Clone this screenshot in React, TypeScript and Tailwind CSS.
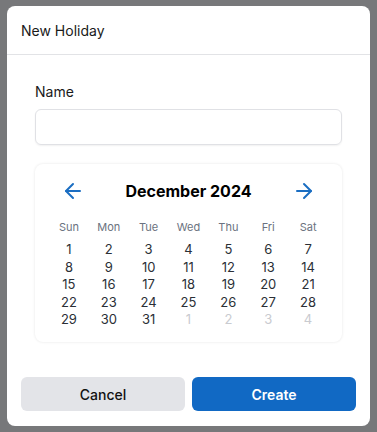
import React from 'react';
import { ArrowLeft, ArrowRight } from 'lucide-react';

const weekDays = ['Sun', 'Mon', 'Tue', 'Wed', 'Thu', 'Fri', 'Sat'];

function buildDays() {
  // December 2024 starts on a Sunday
  const days: { n: number; muted: boolean }[] = [];
  for (let i = 1; i <= 31; i++) days.push({ n: i, muted: false });
  for (let i = 1; i <= 4; i++) days.push({ n: i, muted: true });
  return days;
}

export default function App() {
  const [name, setName] = React.useState('');
  const days = buildDays();

  return (
    <div className="min-h-screen w-full bg-[#77787a] px-[7px] pt-[6px] pb-[6px] font-['Inter',sans-serif]">
      <div className="flex h-[420px] flex-col rounded-lg bg-white">
        <div className="flex h-[49px] items-center border-b border-[#e2e3e6] px-[14px]">
          <h2 className="text-[14px] text-[#1a1a1a]">New Holiday</h2>
        </div>

        <div className="flex flex-1 flex-col px-[28px] pt-[27px]">
          <label className="mb-[7px] block text-[14px] leading-5 text-[#1a1a1a]">Name</label>
          <input
            value={name}
            onChange={(e) => setName(e.target.value)}
            className="h-[36px] w-full rounded-md border border-[#e0e1e5] px-3 text-sm shadow-[0_1px_2px_rgba(0,0,0,0.06)] outline-none"
          />

          <div className="mt-[19px] rounded-lg bg-white px-[14px] pt-4 pb-[13px] shadow-[0_0_3px_rgba(0,0,0,0.1)]">
            <div className="flex h-[22px] items-center justify-between px-[12px]">
              <button className="text-[#1b6ec2]">
                <ArrowLeft className="h-6 w-6" strokeWidth={2} />
              </button>
              <span className="text-[16px] font-bold text-black">December 2024</span>
              <button className="text-[#1b6ec2]">
                <ArrowRight className="h-6 w-6" strokeWidth={2} />
              </button>
            </div>

            <div className="mt-[17px] grid grid-cols-7">
              {weekDays.map((d) => (
                <div key={d} className="text-center text-[11px] leading-4 text-[#6b7280]">
                  {d}
                </div>
              ))}
            </div>

            <div className="mt-[6px] grid grid-cols-7">
              {days.map((d, i) => (
                <div
                  key={i}
                  className={`text-center text-[13px] leading-[17.5px] ${d.muted ? 'text-[#c9cbd0]' : 'text-[#2b2f36]'}`}
                >
                  {d.n}
                </div>
              ))}
            </div>
          </div>
        </div>

        <div className="flex gap-[7px] px-[14px] pb-[15px]">
          <button className="h-[34px] flex-1 rounded-md bg-[#e3e4e8] text-[14px] font-medium text-[#111]">
            Cancel
          </button>
          <button className="h-[34px] flex-1 rounded-md bg-[#1169c4] text-[14px] font-semibold text-white">
            Create
          </button>
        </div>
      </div>
    </div>
  );
}
